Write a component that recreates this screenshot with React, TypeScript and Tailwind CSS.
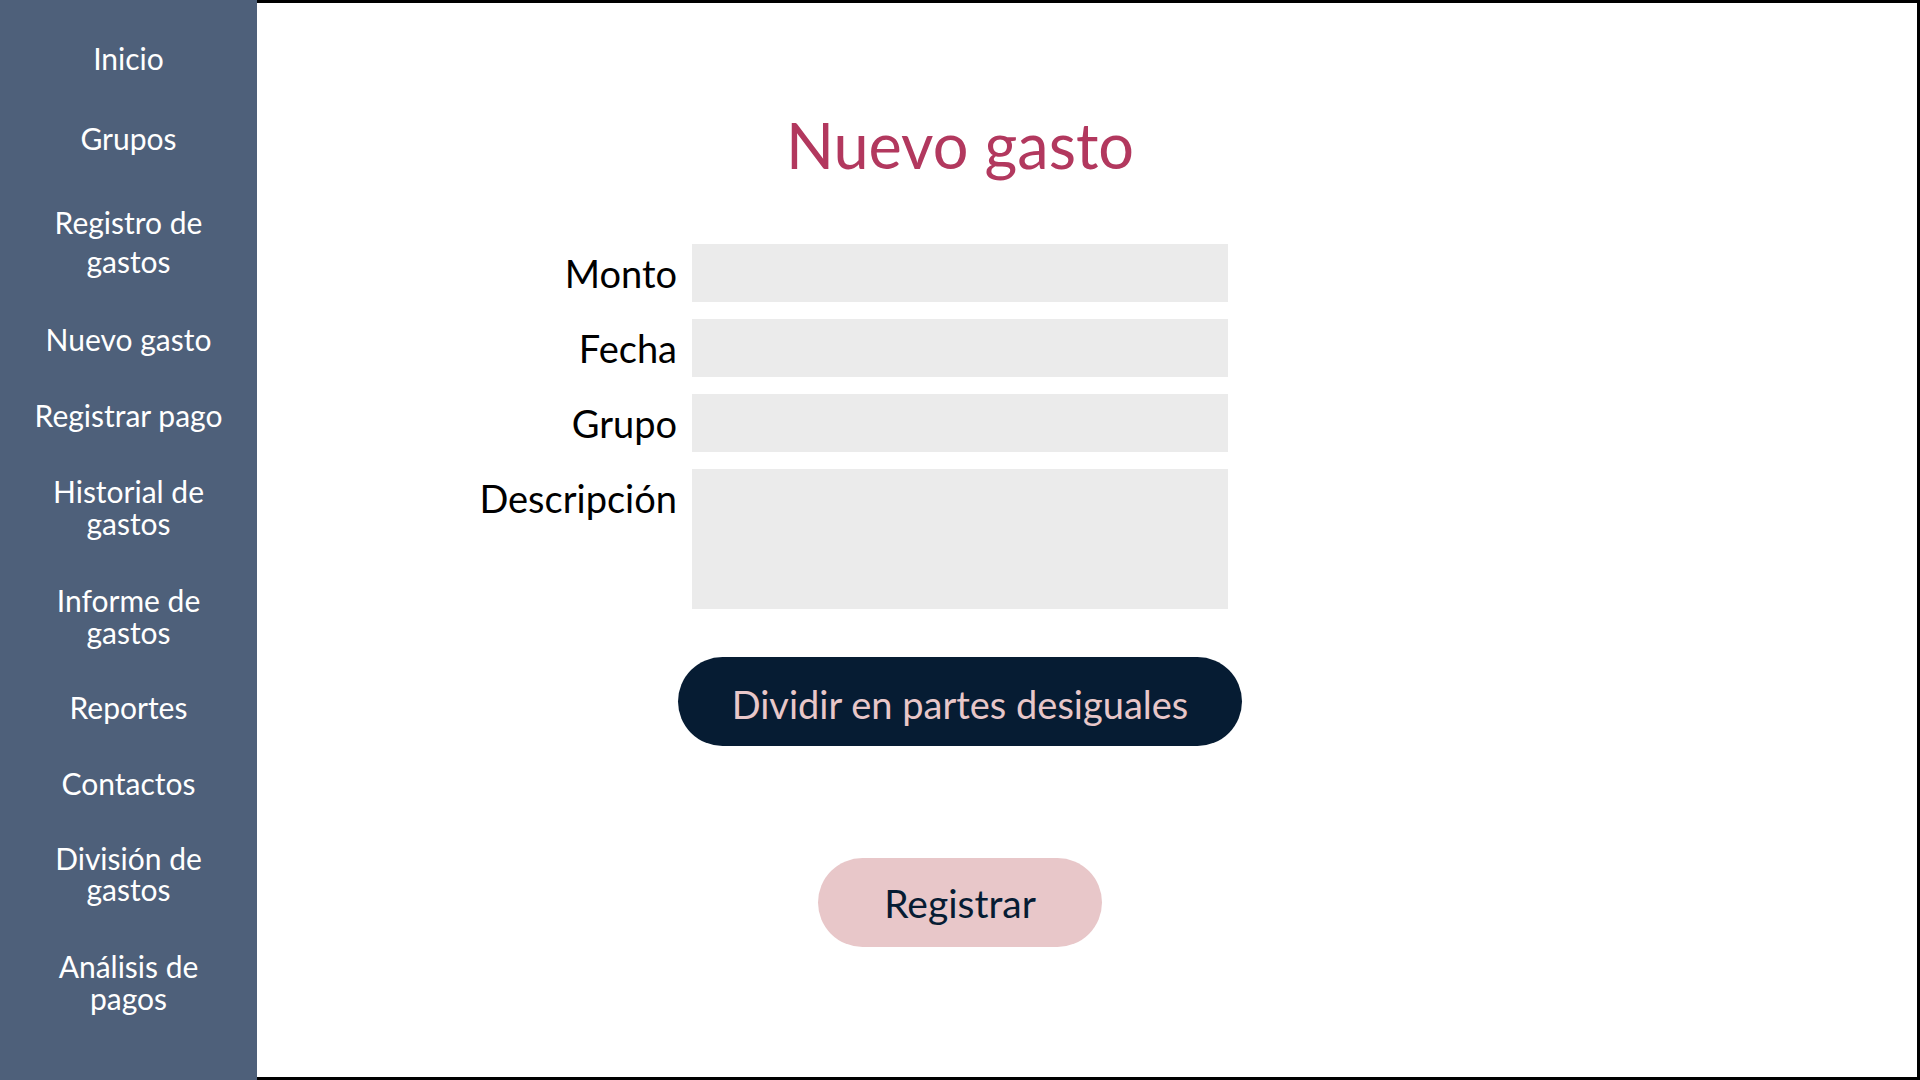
import React from 'react';

const NAV_ITEMS = [
  { label: 'Inicio', cls: '' },
  { label: 'Grupos', cls: 'mt-[4px]' },
  { label: 'Registro de gastos', cls: 'mt-[5px] leading-[39px]' },
  { label: 'Nuevo gasto', cls: '-mt-[1px]' },
  { label: 'Registrar pago', cls: '' },
  { label: 'Historial de gastos', cls: 'leading-[32px]' },
  { label: 'Informe de gastos', cls: 'mt-[2px] leading-[32px]' },
  { label: 'Reportes', cls: '' },
  { label: 'Contactos', cls: '' },
  { label: 'División de gastos', cls: 'leading-[31px]' },
  { label: 'Análisis de pagos', cls: 'mt-[2px] leading-[32px]' },
];

const FIELDS = [
  { label: 'Monto', h: 'h-[58px]' },
  { label: 'Fecha', h: 'h-[58px]' },
  { label: 'Grupo', h: 'h-[58px]' },
  { label: 'Descripción', h: 'h-[140px]' },
];

export default function App() {
  return (
    <div className="flex h-screen w-full overflow-hidden bg-white font-['Lato','Liberation_Sans',sans-serif]">
      {/* Sidebar */}
      <nav className="w-[257px] shrink-0 bg-[#4e607a] text-white">
        <ul className="flex flex-col gap-[43px] px-4 pt-[42px] text-center text-[30px] leading-[33px]">
          {NAV_ITEMS.map(item => (
            <li key={item.label} className={`mx-auto w-[200px] ${item.cls}`}>
              {item.label}
            </li>
          ))}
        </ul>
      </nav>

      {/* Main */}
      <main className="flex-1 border-[3px] border-l-0 border-black">
        <div className="flex w-[1406px] flex-col items-center pt-[102px]">
          <h1 className="text-[63px] leading-[80px] text-[#b2385e]">Nuevo gasto</h1>

          <form className="mt-[59px] grid w-full grid-cols-[1fr_536px_1fr] gap-y-[17px]">
            {FIELDS.map(f => (
              <React.Fragment key={f.label}>
                <label className="pr-[15px] text-right text-[38px] leading-[58px] text-black">
                  {f.label}
                </label>
                {f.label === 'Descripción' ? (
                  <textarea className={`${f.h} resize-none bg-[#ebebeb] outline-none`} />
                ) : (
                  <input className={`${f.h} bg-[#ebebeb] outline-none`} />
                )}
                <div />
              </React.Fragment>
            ))}
          </form>

          <button className="mt-[48px] h-[89px] w-[564px] rounded-full bg-[#061c33] pt-[5px] text-[38px] text-[#e8c7c9]">
            Dividir en partes desiguales
          </button>

          <button className="mt-[112px] h-[89px] w-[284px] rounded-full bg-[#e8c7c9] pt-[2px] text-[39px] text-[#061c33]">
            Registrar
          </button>
        </div>
      </main>
    </div>
  );
}
